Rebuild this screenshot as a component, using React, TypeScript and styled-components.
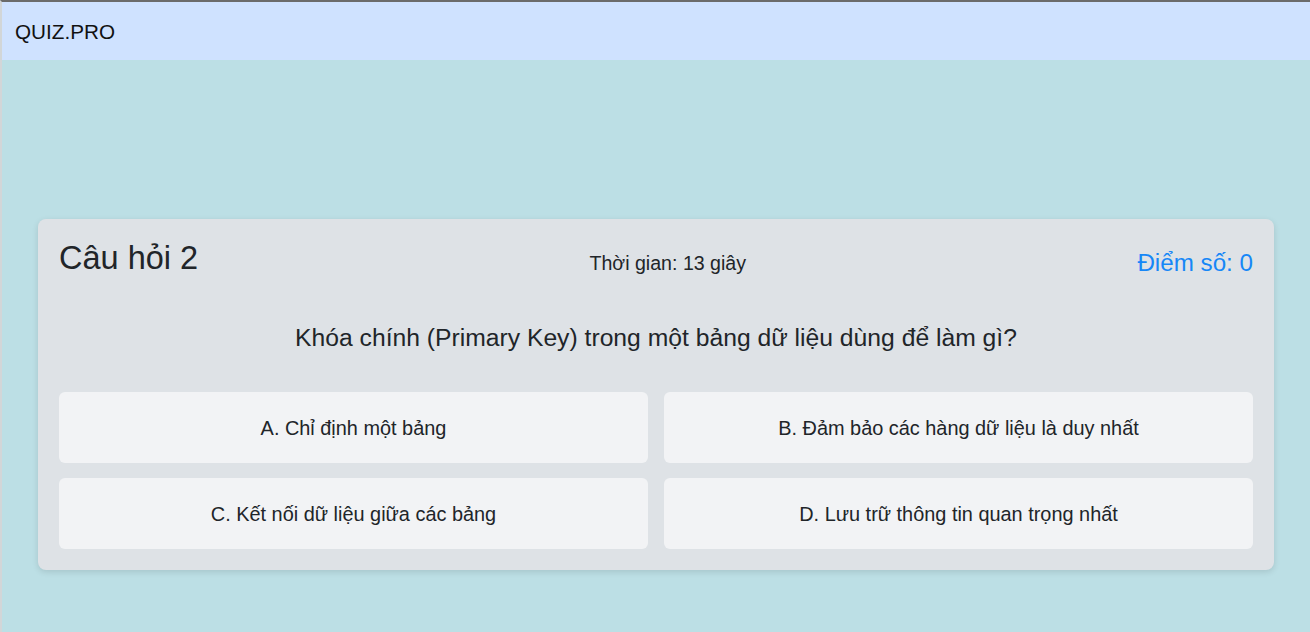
import React from "react";
import styled, { createGlobalStyle } from "styled-components";

const GlobalStyle = createGlobalStyle`
  html, body {
    margin: 0;
    padding: 0;
    background: #bcdfe5;
    font-family: "Liberation Sans", Arial, sans-serif;
    color: #212529;
  }
  * {
    box-sizing: border-box;
  }
`;

const Page = styled.div`
  min-height: 632px;
  border-top: 2px solid #6b6b6b;
  border-left: 2px solid #d2d6d8;
  background: #bcdfe5;
`;

const NavBar = styled.div`
  height: 58px;
  background: #cfe2ff;
  display: flex;
  align-items: center;
  padding: 2px 13px 0 13px;
  font-size: 20.7px;
  color: #111;
`;

const Main = styled.div`
  padding: 159px 36px 0 36px;
`;

const Card = styled.div`
  background: #dee2e6;
  border-radius: 8px;
  box-shadow: 0 2px 6px rgba(0, 0, 0, 0.12);
  padding: 20px 21px 21px 21px;
`;

const Header = styled.div`
  display: flex;
  justify-content: space-between;
  align-items: center;
  height: 38px;
  margin-bottom: 46px;
`;

const Title = styled.h2`
  margin: 0;
  font-size: 32.5px;
  font-weight: 400;
  line-height: 1.2;
  color: #212529;
`;

const Timer = styled.div`
  font-size: 19.6px;
  padding-top: 10px;
  color: #212529;
`;

const Score = styled.div`
  font-size: 24.2px;
  padding-top: 9px;
  color: #1687f7;
`;

const Question = styled.p`
  margin: 0 0 39px 0;
  text-align: center;
  font-size: 24.7px;
  line-height: 30px;
  color: #212529;
`;

const Answers = styled.div`
  display: grid;
  grid-template-columns: 1fr 1fr;
  gap: 15px 16px;
`;

const Answer = styled.button`
  height: 71px;
  padding: 2px 0 0 0;
  border: none;
  border-radius: 6px;
  background: #f2f3f5;
  font-family: "Liberation Sans", Arial, sans-serif;
  font-size: 19.9px;
  color: #212529;
  cursor: pointer;

  &:hover {
    background: #e9ecef;
  }
`;

const answers = [
  "A. Chỉ định một bảng",
  "B. Đảm bảo các hàng dữ liệu là duy nhất",
  "C. Kết nối dữ liệu giữa các bảng",
  "D. Lưu trữ thông tin quan trọng nhất",
];

export default function App() {
  return (
    <>
      <GlobalStyle />
      <Page>
        <NavBar>QUIZ.PRO</NavBar>
        <Main>
          <Card>
            <Header>
              <Title>Câu hỏi 2</Title>
              <Timer>Thời gian: 13 giây</Timer>
              <Score>Điểm số: 0</Score>
            </Header>
            <Question>
              Khóa chính (Primary Key) trong một bảng dữ liệu dùng để làm gì?
            </Question>
            <Answers>
              {answers.map((a) => (
                <Answer key={a}>{a}</Answer>
              ))}
            </Answers>
          </Card>
        </Main>
      </Page>
    </>
  );
}
